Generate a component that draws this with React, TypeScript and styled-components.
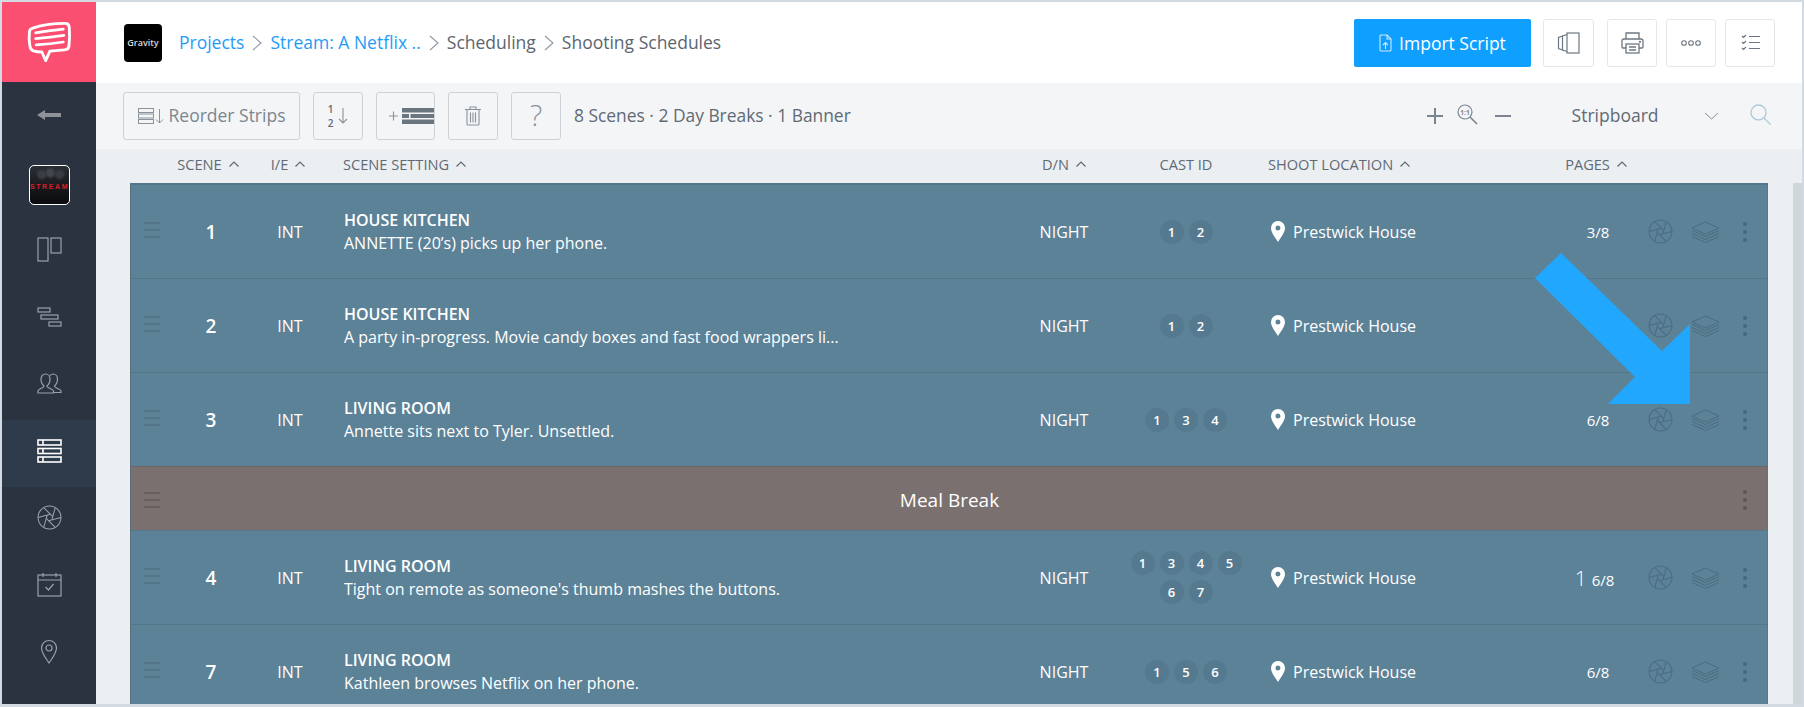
import React from "react";
import styled, { createGlobalStyle } from "styled-components";

const Global = createGlobalStyle`
  html, body { margin: 0; padding: 0; background: #fff; overflow: hidden; }
  * { box-sizing: border-box; }
  body { font-family: "Open Sans", "Liberation Sans", sans-serif; }
`;

const Frame = styled.div`
  position: relative;
  width: 1804px;
  height: 707px;
  display: flex;
  overflow: hidden;
  border: solid #d3dae1;
  border-width: 2px 2px 3px 2px;
`;

const Sidebar = styled.nav`
  width: 94px;
  flex: none;
  display: flex;
  flex-direction: column;
  background: #2c3340;
`;

const LogoBlock = styled.div`
  height: 80px;
  background: #fb4f72;
  display: flex;
  align-items: center;
  justify-content: center;
`;

const BackItem = styled.div`
  height: 65px;
  display: flex;
  align-items: center;
  justify-content: center;
`;

const ThumbItem = styled.div`
  height: 72px;
  display: flex;
  justify-content: center;
  padding-top: 18px;
`;

const Thumb = styled.div`
  width: 41px;
  height: 40px;
  border: 1.5px solid #fff;
  border-radius: 5px;
  background:
    radial-gradient(circle at 30% 22%, #3a3e44 0, #3a3e44 3px, transparent 6px),
    radial-gradient(circle at 52% 18%, #42464c 0, #42464c 3px, transparent 6px),
    radial-gradient(circle at 76% 22%, #383c42 0, #383c42 3px, transparent 6px),
    linear-gradient(180deg, #2b2f33 0%, #1a1c20 45%, #0b0b0d 100%);
  color: #d3202a;
  font: 700 7px "Liberation Sans", sans-serif;
  letter-spacing: 1.6px;
  display: flex;
  align-items: center;
  justify-content: center;
  padding-left: 1px;
  padding-top: 2px;
  overflow: hidden;
`;

const NavItem = styled.div<{ $active?: boolean }>`
  height: 67px;
  padding-bottom: 6px;
  display: flex;
  align-items: center;
  justify-content: center;
  background: ${(p) => (p.$active ? "#2e3b4b" : "transparent")};
  color: ${(p) => (p.$active ? "#ffffff" : "#99a1ab")};
`;

const Main = styled.main`
  flex: 1;
  min-width: 0;
  display: flex;
  flex-direction: column;
`;

const Header = styled.header`
  height: 81px;
  flex: none;
  background: #fff;
  display: flex;
  align-items: center;
  padding: 0 27px 0 28px;
`;

const StudioLogo = styled.div`
  width: 38px;
  height: 38px;
  border-radius: 4px;
  background: #000;
  color: #d8d8d8;
  font: 600 9px "Open Sans", sans-serif;
  display: flex;
  align-items: center;
  justify-content: center;
  margin-right: 17px;
`;

const Crumbs = styled.div`
  flex: 1;
  display: flex;
  align-items: center;
  font-size: 17.5px;
  color: #5b6671;
  padding-bottom: 2px;
`;

const CrumbLink = styled.span`
  color: #1f9cf6;
`;

const CrumbSep = styled.span`
  color: #8f98a2;
  display: flex;
  margin: 3px 8px 0 8px;
`;

const ImportButton = styled.div`
  width: 177px;
  height: 48px;
  background: #0f9fff;
  border-radius: 2px;
  color: #fff;
  font-size: 17.5px;
  display: flex;
  align-items: center;
  justify-content: center;
  gap: 7px;
  margin-right: 12px;
`;

const HeaderButton = styled.div<{ $w?: number; $mr?: number }>`
  width: ${(p) => p.$w ?? 50}px;
  height: 48px;
  margin-right: ${(p) => p.$mr ?? 9}px;
  border: 1px solid #e3e7ec;
  border-radius: 3px;
  background: #fff;
  color: #6d7781;
  display: flex;
  align-items: center;
  justify-content: center;
  &:last-child { margin-right: 0; }
`;

const Toolbar = styled.div`
  height: 66px;
  flex: none;
  background: #f4f5f7;
  display: flex;
  align-items: center;
  padding: 0 31px 0 27px;
  color: #5f6a75;
`;

const ToolButton = styled.div<{ $w?: number; $mr?: number }>`
  width: ${(p) => p.$w ?? 50}px;
  height: 48px;
  margin-right: ${(p) => p.$mr ?? 13}px;
  border: 1.5px solid #ccd2d8;
  border-radius: 3px;
  color: #8a939c;
  display: flex;
  align-items: center;
  justify-content: center;
  gap: 5px;
  font-size: 17.5px;
  padding-bottom: 1px;
`;

const AddButton = styled(ToolButton)`
  justify-content: flex-end;
  padding-bottom: 0;
`;

const ReorderLabel = styled.span`
  color: #7b858f;
  margin-top: -2px;
`;

const SortNums = styled.span`
  display: flex;
  flex-direction: column;
  align-items: center;
  font-size: 10px;
  line-height: 14px;
  font-weight: 600;
  color: #5f6a75;
`;

const Question = styled.span`
  font-size: 29px;
  line-height: 32px;
  font-weight: 300;
  color: #8a929b;
  margin-top: -2px;
`;

const Summary = styled.div`
  flex: 1;
  font-size: 17.4px;
  padding-bottom: 2px;
`;

const ZoomGroup = styled.div`
  display: flex;
  align-items: center;
  color: #7b858f;
  margin-right: 61px;
  gap: 14px;
`;

const ViewName = styled.div`
  font-size: 17.5px;
  color: #5f6a75;
  margin-right: 45.5px;
  padding-bottom: 2px;
`;

const ChevronSlot = styled.div`
  display: flex;
  color: #858e98;
  margin-right: 31px;
`;

const SearchSlot = styled.div`
  display: flex;
  color: #aecbda;
`;

const columns = "44px 70px 90px 689px 80px 164px 290px 80px 45px 45px 34px";

const TableHead = styled.div`
  height: 34px;
  flex: none;
  background: #eceff2;
  display: grid;
  grid-template-columns: ${columns};
  align-items: center;
  padding: 0 0 4px 35px;
  font-size: 14.6px;
  color: #5f6a75;
`;

const HeadCell = styled.div<{ $col: number; $left?: boolean; $pad?: number; $pr?: number }>`
  grid-column: ${(p) => p.$col};
  display: flex;
  align-items: center;
  gap: 7px;
  justify-content: ${(p) => (p.$left ? "flex-start" : "center")};
  padding-left: ${(p) => p.$pad ?? 0}px;
  padding-right: ${(p) => p.$pr ?? 0}px;
`;

const Body = styled.div`
  flex: 1;
  min-height: 0;
  display: flex;
  background: #eceff2;
  padding-left: 34px;
`;

const Table = styled.div`
  width: 1638px;
  flex: none;
  overflow: hidden;
  border: solid #56788c;
  border-width: 1px 1px 0 1px;
  border-left-color: #5a6f7e;
`;

const Gutter = styled.div`
  flex: 1;
`;

const Scrollbar = styled.div`
  width: 9px;
  flex: none;
  background: #d0d6db;
`;

const Row = styled.div`
  height: 94px;
  display: grid;
  grid-template-columns: ${columns};
  align-items: center;
  background: #5c8298;
  border-top: 1px solid #547689;
  color: #fff;
  font-size: 16px;
`;

const Handle = styled.div<{ $tone: string }>`
  width: 16px;
  margin-left: 13px;
  display: flex;
  flex-direction: column;
  gap: 5px;
  & > i {
    display: block;
    height: 2px;
    background: ${(p) => p.$tone};
  }
`;

const RowHandle = styled(Handle)`
  margin-top: -3px;
`;

const SceneNum = styled.div`
  text-align: center;
  font-size: 19px;
  font-weight: 600;
  padding-left: 2px;
`;

const Centered = styled.div`
  text-align: center;
`;

const Setting = styled.div`
  padding-left: 9px;
  line-height: 23px;
`;

const SettingTitle = styled.div`
  font-weight: 600;
  font-size: 16px;
`;

const Cast = styled.div`
  display: flex;
  flex-wrap: wrap;
  justify-content: center;
  gap: 5px;
  padding: 0 26px;
`;

const Badge = styled.span`
  width: 24px;
  height: 24px;
  border-radius: 50%;
  background: #557a8f;
  display: flex;
  align-items: center;
  justify-content: center;
  font-size: 13px;
  font-weight: 600;
`;

const Location = styled.div`
  display: flex;
  align-items: center;
  gap: 8px;
  padding-left: 3px;
`;

const Pages = styled.div`
  text-align: center;
  font-size: 15px;
  padding-top: 1px;
`;

const PageWhole = styled.span`
  font-size: 21px;
  font-weight: 300;
  margin: 0 5px 0 -7px;
`;

const IconCell = styled.div`
  display: flex;
  justify-content: center;
  color: #4a6c80;
`;

const Dots = styled.div<{ $tone: string }>`
  display: flex;
  flex-direction: column;
  align-items: center;
  gap: 4px;
  & > i {
    width: 4px;
    height: 4px;
    border-radius: 50%;
    background: ${(p) => p.$tone};
  }
`;

const BreakRow = styled.div`
  height: 64px;
  padding: 2px 5px 0 0;
  display: grid;
  grid-template-columns: 44px 1fr 34px;
  align-items: center;
  background: #7b7070;
  border-top: 1px solid #6e6464;
  color: #fff;
  font-size: 19px;
`;

const BreakLabel = styled.div`
  text-align: center;
  padding-right: 4px;
`;

const ArrowOverlay = styled.svg`
  position: absolute;
  left: -2px;
  top: -2px;
  pointer-events: none;
`;

type IconProps = { s?: number };

const Line = ({ w, h, children }: { w: number; h: number; children: React.ReactNode }) => (
  <svg width={w} height={h} viewBox={`0 0 ${w} ${h}`} fill="none" stroke="currentColor" strokeWidth="1.2" style={{ display: "block" }}>
    {children}
  </svg>
);

const LogoIcon = () => (
  <svg width="45" height="42" viewBox="0 0 47 44" fill="none" stroke="#fff" style={{ display: "block" }}>
    <path
      d="M6 7.5C15 4 28 2.5 40 2.5c3 0 4 1.5 4.2 4 .5 7 .3 15-.3 20-.3 2.500-2 3.500-4.500 3.700-5 .4-10 .8-15.500 1.300L19.500 41.500 15.500 32.500C12 32.500 9 32 6.500 31.300 4.500 30.600 3.500 29 3 26.500 2 21 2 15 2.500 11 2.800 9 4 8 6 7.500Z"
      strokeWidth="3"
      strokeLinejoin="round"
    />
    <path d="M9 12.500C18 11 28 9.500 38 8.500M9 18.500C19 17.500 28 16.500 38.500 15M9.500 25C19 24.500 29 23.500 38 22" strokeWidth="2.800" strokeLinecap="round" />
  </svg>
);

const BackArrow = () => (
  <svg width="24" height="12" viewBox="0 0 24 12" style={{ display: "block" }}>
    <path d="M0 6 8 1v3h16v4H8v3Z" fill="#8f9399" />
  </svg>
);

const BoardIcon = () => (
  <Line w={25} h={25}>
    <rect x="1" y="1" width="10" height="23" />
    <rect x="14" y="1" width="10" height="15" />
  </Line>
);

const GanttIcon = () => (
  <Line w={25} h={20}>
    <rect x="1" y="1" width="12" height="4" />
    <rect x="4" y="8" width="17" height="4" />
    <rect x="12" y="15" width="12" height="4" />
  </Line>
);

const PeopleIcon = () => (
  <Line w={25} h={21}>
    <path d="M1 20v-2c0-1.500 2-2 4-3 1-.5 2-1 2-2-2-1.500-3-4-3-7 0-3 2-5 4.500-5S13 3 13 6c0 3-1 5.500-3 7 0 1 1 1.500 2 2 2 1 4.500 1.500 4.500 3v2Z" />
    <path d="M13 2.500C14 1.500 15 1 16 1c2.500 0 4.500 2 4.500 5 0 3-1 5.500-3 7 0 1 1 1.500 2 2 2 1 4.500 1.500 4.500 3v1.500h-7.500" />
  </Line>
);

const StripIcon = () => (
  <svg width="25" height="24" viewBox="0 0 25 24" fill="none" stroke="currentColor" strokeWidth="1.600" style={{ display: "block" }}>
    <rect x="1" y="1" width="23" height="5" />
    <rect x="1" y="9.500" width="23" height="5" />
    <rect x="1" y="18" width="23" height="5" />
    <path d="M6 1v5M6 9.500v5M6 18v5" />
  </svg>
);

const Aperture = ({ s = 25 }: IconProps) => {
  const lines = [0, 60, 120, 180, 240, 300].map((a) => {
    const o = (a * Math.PI) / 180;
    const i = ((a + 105) * Math.PI) / 180;
    return `M${12 + 11 * Math.cos(o)} ${12 + 11 * Math.sin(o)}L${12 + 3.2 * Math.cos(i)} ${12 + 3.2 * Math.sin(i)}`;
  });
  return (
    <svg width={s} height={s} viewBox="0 0 24 24" fill="none" stroke="currentColor" strokeWidth="1" style={{ display: "block" }}>
      <circle cx="12" cy="12" r="11" />
      {lines.map((d) => (
        <path key={d} d={d} />
      ))}
    </svg>
  );
};

const CalendarIcon = () => (
  <Line w={25} h={25}>
    <rect x="1" y="3" width="23" height="21" />
    <path d="M1 8h23M6 1v4M19 1v4M8.500 15l3 3 5-6" />
  </Line>
);

const PinOutline = () => (
  <Line w={18} h={25}>
    <path d="M9 24C5 18 1.500 14 1.500 9a7.500 7.500 0 0 1 15 0C16.500 14 13 18 9 24Z" />
    <circle cx="9" cy="9" r="3" />
  </Line>
);

const LayersIcon = () => (
  <svg width="29" height="22" viewBox="0 0 29 22" fill="none" stroke="currentColor" strokeWidth="1" style={{ display: "block" }}>
    <path d="M14.500 1 28 7 14.500 13 1 7Z" />
    <path d="M1 9.500 14.500 15.500 28 9.500M1 12.500 14.500 18.500 28 12.500M1 15.500 14.500 21.500 28 15.500" />
  </svg>
);

const PinFilled = () => (
  <svg width="14" height="21" viewBox="0 0 14 21" style={{ display: "block" }}>
    <path fillRule="evenodd" fill="#fff" d="M7 21C3 15 0 11 0 7a7 7 0 0 1 14 0C14 11 11 15 7 21ZM7 4.500a2.500 2.500 0 1 0 0 5 2.500 2.500 0 0 0 0-5Z" />
  </svg>
);

const CrumbChevron = () => (
  <svg width="10" height="16" viewBox="0 0 10 16" fill="none" stroke="currentColor" strokeWidth="1.100" style={{ display: "block" }}>
    <path d="M1 1l8 7-8 7" />
  </svg>
);

const FileUp = () => (
  <svg width="13" height="18" viewBox="0 0 13 18" fill="none" stroke="#cfeaff" strokeWidth="1.100" style={{ display: "block" }}>
    <path d="M1 2a1 1 0 0 1 1-1h6l4 4v11a1 1 0 0 1-1 1H2a1 1 0 0 1-1-1Z" />
    <path d="M8 1v4h4M6.500 15V9M4 11l2.500-2.500L9 11" />
  </svg>
);

const PagesIcon = () => (
  <svg width="23" height="22" viewBox="0 0 23 22" fill="none" stroke="currentColor" strokeWidth="1.200" style={{ display: "block" }}>
    <rect x="10" y="1" width="12" height="20" />
    <path d="M10 2.500 5.500 4v14L10 19.500M5.500 4 1.500 5.500v11l4 1.500" />
  </svg>
);

const PrinterIcon = () => (
  <svg width="23" height="22" viewBox="0 0 23 22" fill="none" stroke="currentColor" strokeWidth="1.300" style={{ display: "block" }}>
    <path d="M5 7V1h13v6M5 16H2a1 1 0 0 1-1-1V9a2 2 0 0 1 2-2h17a2 2 0 0 1 2 2v6a1 1 0 0 1-1 1h-3" />
    <rect x="5" y="12" width="13" height="9" />
    <path d="M8 15h7M8 18h7" />
    <circle cx="19" cy="9.800" r=".5" />
  </svg>
);

const MoreIcon = () => (
  <svg width="20" height="6" viewBox="0 0 20 6" fill="none" stroke="currentColor" strokeWidth="1.100" style={{ display: "block" }}>
    <circle cx="3" cy="3" r="2.300" />
    <circle cx="10" cy="3" r="2.300" />
    <circle cx="17" cy="3" r="2.300" />
  </svg>
);

const ChecklistIcon = () => (
  <svg width="19" height="17" viewBox="0 0 19 17" fill="none" stroke="currentColor" strokeWidth="1.200" style={{ display: "block" }}>
    <path d="M8 2.500h11M8 8.500h11M8 14.500h11M1 2l1.500 1.500L5 1M1 8l1.500 1.500L5 7M1 14l1.500 1.500L5 13" />
  </svg>
);

const StripsSort = () => (
  <svg width="26" height="16" viewBox="0 0 26 16" fill="none" stroke="currentColor" strokeWidth="1" style={{ display: "block" }}>
    <rect x=".5" y=".5" width="15" height="4" />
    <rect x=".5" y="6" width="15" height="4" />
    <rect x=".5" y="11.500" width="15" height="4" />
    <path d="M21.500 1v14M18 11.500 21.500 15l3.500-3.500" />
  </svg>
);

const DownArrow = () => (
  <svg width="10" height="17" viewBox="0 0 10 17" fill="none" stroke="currentColor" strokeWidth="1.100" style={{ display: "block" }}>
    <path d="M5 1v15M1 12l4 4 4-4" />
  </svg>
);

const AddStrip = () => (
  <svg width="45" height="16" viewBox="0 0 45 16" style={{ display: "block" }}>
    <path d="M0 8h9M4.500 3.500v9" stroke="currentColor" strokeWidth="1.100" fill="none" />
    <path d="M13 0h32v4.500H13ZM13 6h7v4h-7ZM21.500 6H45v4H21.500ZM13 11.500h32V16H13Z" fill="#6b7580" />
  </svg>
);

const TrashIcon = () => (
  <svg width="16" height="20" viewBox="0 0 16 20" fill="none" stroke="currentColor" strokeWidth="1.100" style={{ display: "block" }}>
    <path d="M0 3.500h16M5 3.500V1h6v2.500M2 3.500V18a1 1 0 0 0 1 1h10a1 1 0 0 0 1-1V3.500M5.500 6.500v10M8 6.500v10M10.500 6.500v10" />
  </svg>
);

const PlusIcon = () => (
  <svg width="16" height="16" viewBox="0 0 16 16" stroke="currentColor" strokeWidth="2" style={{ display: "block" }}>
    <path d="M8 0v16M0 8h16" />
  </svg>
);

const MinusIcon = () => (
  <svg width="16" height="16" viewBox="0 0 16 16" stroke="currentColor" strokeWidth="2" style={{ display: "block", marginLeft: "3px" }}>
    <path d="M0 8h16" />
  </svg>
);

const ZoomReset = () => (
  <svg width="21" height="21" viewBox="0 0 21 21" fill="none" stroke="currentColor" strokeWidth="1.200" style={{ display: "block", marginTop: "-4px" }}>
    <circle cx="8" cy="8" r="7" />
    <path d="M13 13l7 7" strokeWidth="1.600" />
    <text x="8" y="10.500" textAnchor="middle" fontFamily="Open Sans, sans-serif" fontWeight="700" fontSize="6.500" fill="currentColor" stroke="none">
      1:1
    </text>
  </svg>
);

const SelectChevron = () => (
  <svg width="15" height="8" viewBox="0 0 15 8" fill="none" stroke="currentColor" strokeWidth="1" style={{ display: "block" }}>
    <path d="M1 1l6.500 6L14 1" />
  </svg>
);

const SearchIcon = () => (
  <svg width="21" height="21" viewBox="0 0 21 21" fill="none" stroke="currentColor" strokeWidth="1.300" style={{ display: "block", marginTop: "-4px" }}>
    <circle cx="8.500" cy="8.500" r="7.500" />
    <path d="M14 14l6.500 6.500" />
  </svg>
);

const Caret = () => (
  <svg width="10" height="6" viewBox="0 0 10 6" fill="none" stroke="currentColor" strokeWidth="1.200" style={{ display: "block" }}>
    <path d="M.5 5.500 5 1l4.500 4.500" />
  </svg>
);

type Scene = { num: string; title: string; text: string; cast: number[]; whole?: string; frac: string };

const firstRows: Scene[] = [
  { num: "1", title: "HOUSE KITCHEN", text: "ANNETTE (20’s) picks up her phone.", cast: [1, 2], frac: "3/8" },
  { num: "2", title: "HOUSE KITCHEN", text: "A party in-progress. Movie candy boxes and fast food wrappers li...", cast: [1, 2], frac: "" },
  { num: "3", title: "LIVING ROOM", text: "Annette sits next to Tyler. Unsettled.", cast: [1, 3, 4], frac: "6/8" },
];

const lastRows: Scene[] = [
  { num: "4", title: "LIVING ROOM", text: "Tight on remote as someone's thumb mashes the buttons.", cast: [1, 3, 4, 5, 6, 7], whole: "1", frac: "6/8" },
  { num: "7", title: "LIVING ROOM", text: "Kathleen browses Netflix on her phone.", cast: [1, 5, 6], frac: "6/8" },
];

const SceneRow = ({ s }: { s: Scene }) => (
  <Row>
    <RowHandle $tone="#527589">
      <i />
      <i />
      <i />
    </RowHandle>
    <SceneNum>{s.num}</SceneNum>
    <Centered>INT</Centered>
    <Setting>
      <SettingTitle>{s.title}</SettingTitle>
      <div>{s.text}</div>
    </Setting>
    <Centered>NIGHT</Centered>
    <Cast>
      {s.cast.map((c) => (
        <Badge key={c}>{c}</Badge>
      ))}
    </Cast>
    <Location>
      <PinFilled />
      Prestwick House
    </Location>
    <Pages>
      {s.whole && <PageWhole>{s.whole}</PageWhole>}
      {s.frac}
    </Pages>
    <IconCell>
      <Aperture />
    </IconCell>
    <IconCell>
      <LayersIcon />
    </IconCell>
    <Dots $tone="#46687c">
      <i />
      <i />
      <i />
    </Dots>
  </Row>
);

export default function App() {
  return (
    <>
      <Global />
      <Frame>
        <Sidebar>
          <LogoBlock>
            <LogoIcon />
          </LogoBlock>
          <BackItem>
            <BackArrow />
          </BackItem>
          <ThumbItem>
            <Thumb>STREAM</Thumb>
          </ThumbItem>
          <NavItem>
            <BoardIcon />
          </NavItem>
          <NavItem>
            <GanttIcon />
          </NavItem>
          <NavItem>
            <PeopleIcon />
          </NavItem>
          <NavItem $active>
            <StripIcon />
          </NavItem>
          <NavItem>
            <Aperture />
          </NavItem>
          <NavItem>
            <CalendarIcon />
          </NavItem>
          <NavItem>
            <PinOutline />
          </NavItem>
        </Sidebar>
        <Main>
          <Header>
            <StudioLogo>Gravity</StudioLogo>
            <Crumbs>
              <CrumbLink>Projects</CrumbLink>
              <CrumbSep>
                <CrumbChevron />
              </CrumbSep>
              <CrumbLink>Stream: A Netflix ..</CrumbLink>
              <CrumbSep>
                <CrumbChevron />
              </CrumbSep>
              <span>Scheduling</span>
              <CrumbSep>
                <CrumbChevron />
              </CrumbSep>
              <span>Shooting Schedules</span>
            </Crumbs>
            <ImportButton>
              <FileUp />
              Import Script
            </ImportButton>
            <HeaderButton $w={51} $mr={13}>
              <PagesIcon />
            </HeaderButton>
            <HeaderButton $mr={9}>
              <PrinterIcon />
            </HeaderButton>
            <HeaderButton>
              <MoreIcon />
            </HeaderButton>
            <HeaderButton>
              <ChecklistIcon />
            </HeaderButton>
          </Header>
          <Toolbar>
            <ToolButton $w={177}>
              <StripsSort />
              <ReorderLabel>Reorder Strips</ReorderLabel>
            </ToolButton>
            <ToolButton>
              <SortNums>
                <span>1</span>
                <span>2</span>
              </SortNums>
              <DownArrow />
            </ToolButton>
            <AddButton $w={59}>
              <AddStrip />
            </AddButton>
            <ToolButton>
              <TrashIcon />
            </ToolButton>
            <ToolButton>
              <Question>?</Question>
            </ToolButton>
            <Summary>8 Scenes · 2 Day Breaks · 1 Banner</Summary>
            <ZoomGroup>
              <PlusIcon />
              <ZoomReset />
              <MinusIcon />
            </ZoomGroup>
            <ViewName>Stripboard</ViewName>
            <ChevronSlot>
              <SelectChevron />
            </ChevronSlot>
            <SearchSlot>
              <SearchIcon />
            </SearchSlot>
          </Toolbar>
          <TableHead>
            <HeadCell $col={2} $pr={4}>
              SCENE <Caret />
            </HeadCell>
            <HeadCell $col={3} $pr={4}>
              I/E <Caret />
            </HeadCell>
            <HeadCell $col={4} $left $pad={8}>
              SCENE SETTING <Caret />
            </HeadCell>
            <HeadCell $col={5}>
              D/N <Caret />
            </HeadCell>
            <HeadCell $col={6}>CAST ID</HeadCell>
            <HeadCell $col={7} $left>
              SHOOT LOCATION <Caret />
            </HeadCell>
            <HeadCell $col={8} $pr={4}>
              PAGES <Caret />
            </HeadCell>
          </TableHead>
          <Body>
            <Table>
              {firstRows.map((s) => (
                <SceneRow key={s.num} s={s} />
              ))}
              <BreakRow>
                <Handle $tone="#6a5f5f">
                  <i />
                  <i />
                  <i />
                </Handle>
                <BreakLabel>Meal Break</BreakLabel>
                <Dots $tone="#5f5555">
                  <i />
                  <i />
                  <i />
                </Dots>
              </BreakRow>
              {lastRows.map((s) => (
                <SceneRow key={s.num} s={s} />
              ))}
            </Table>
            <Gutter />
            <Scrollbar />
          </Body>
        </Main>
        <ArrowOverlay width="1804" height="707" viewBox="0 0 1804 707">
          <polygon points="1561,253 1535,278 1635,377 1608,404 1690,404 1690,324 1662,351" fill="#22a7ff" />
        </ArrowOverlay>
      </Frame>
    </>
  );
}
